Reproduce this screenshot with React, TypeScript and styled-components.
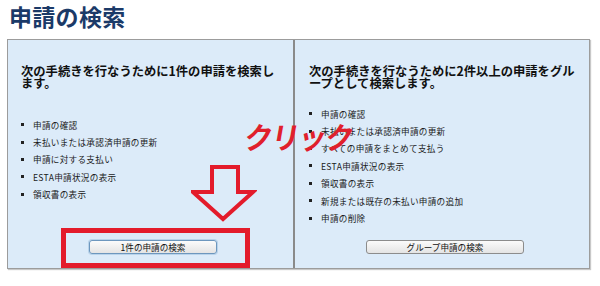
import React from "react";
import styled, { createGlobalStyle } from "styled-components";

const Global = createGlobalStyle`
  html, body { margin: 0; padding: 0; background: #ffffff; }
  body { font-family: "Noto Sans CJK JP", "Noto Sans", sans-serif; }
`;

const Page = styled.div`
  position: relative;
  width: 600px;
  height: 286px;
  overflow: hidden;
`;

const Title = styled.h1`
  margin: 0;
  padding: 3px 0 0 9px;
  height: 39px;
  box-sizing: border-box;
  font-size: 23px;
  line-height: 26px;
  font-weight: 700;
  color: #1b3a68;
  letter-spacing: 0.3px;
`;

const Box = styled.div`
  margin-left: 7px;
  width: 583px;
  height: 230px;
  box-sizing: border-box;
  display: grid;
  grid-template-columns: 285px 1fr;
  background: #dcebf9;
  border: 1px solid #9c9c9c;
  box-shadow: 1px 1px 1px #c8c8c8;
`;

const Panel = styled.div<{ $divider?: boolean; $pad: number }>`
  display: flex;
  flex-direction: column;
  padding: 25px 8px 14px ${(p) => p.$pad}px;
  border-left: ${(p) => (p.$divider ? "2px solid #8a8a8a" : "none")};
  min-width: 0;
`;

const Heading = styled.div<{ $gap: number }>`
  font-size: 12.3px;
  line-height: 12px;
  font-weight: 700;
  color: #111;
  margin-bottom: ${(p) => p.$gap}px;
`;

const List = styled.ul`
  list-style: none;
  margin: 0;
  padding: 0;
`;

const Item = styled.li`
  display: flex;
  align-items: center;
  gap: 9px;
  height: 17.4px;
  font-size: 8.6px;
  color: #1a1a1a;
  letter-spacing: 0.3px;
  &::before {
    content: "";
    width: 3px;
    height: 3px;
    background: #222;
    flex: none;
  }
`;

const ButtonRow = styled.div`
  margin-top: auto;
  display: flex;
  justify-content: center;
`;

const Button = styled.button<{ $w: number; $blue?: boolean }>`
  width: ${(p) => p.$w}px;
  height: 14px;
  padding: 0;
  border-radius: 3px;
  border: 1px solid ${(p) => (p.$blue ? "#6d97be" : "#8c8c8c")};
  background: linear-gradient(#fbfbfb, #e4e4e4);
  font-family: "Noto Sans CJK JP", sans-serif;
  font-size: 8.6px;
  line-height: 12px;
  color: #111;
  box-shadow: ${(p) => (p.$blue ? "0 0 0 1px #b9d3ea" : "none")};
`;

const RedBox = styled.div`
  position: absolute;
  left: 61px;
  top: 228px;
  width: 189px;
  height: 40px;
  box-sizing: border-box;
  border: 5px solid #e31b2b;
`;

const Arrow = styled.svg`
  position: absolute;
  left: 191px;
  top: 165px;
`;

const Click = styled.div`
  position: absolute;
  left: 245px;
  top: 117px;
  font-size: 28px;
  line-height: 38px;
  font-weight: 700;
  color: #e0202c;
  transform: skewX(-10deg) scaleY(1.08);
  transform-origin: left center;
  letter-spacing: -1px;
`;

const leftItems = [
  "申請の確認",
  "未払いまたは承認済申請の更新",
  "申請に対する支払い",
  "ESTA申請状況の表示",
  "領収書の表示",
];

const rightItems = [
  "申請の確認",
  "未払いまたは承認済申請の更新",
  "すべての申請をまとめて支払う",
  "ESTA申請状況の表示",
  "領収書の表示",
  "新規または既存の未払い申請の追加",
  "申請の削除",
];

export default function App() {
  return (
    <>
      <Global />
      <Page>
        <Title>申請の検索</Title>
        <Box>
          <Panel $pad={13}>
            <Heading $gap={27}>
              次の手続きを行なうために1件の申請を検索します。
            </Heading>
            <List>
              {leftItems.map((t) => (
                <Item key={t}>{t}</Item>
              ))}
            </List>
            <ButtonRow>
              <Button $w={128} $blue>
                1件の申請の検索
              </Button>
            </ButtonRow>
          </Panel>
          <Panel $divider $pad={14}>
            <Heading $gap={16}>
              次の手続きを行なうために2件以上の申請をグループとして検索します。
            </Heading>
            <List>
              {rightItems.map((t) => (
                <Item key={t}>{t}</Item>
              ))}
            </List>
            <ButtonRow>
              <Button $w={158}>グループ申請の検索</Button>
            </ButtonRow>
          </Panel>
        </Box>
        <Click>クリック</Click>
        <Arrow width="66" height="58" viewBox="0 0 66 58">
          <polygon
            points="21,2 47,2 47,27 62,27 32,54 2,27 21,27"
            fill="none"
            stroke="#e31b2b"
            strokeWidth="4"
            strokeLinejoin="miter"
          />
        </Arrow>
        <RedBox />
      </Page>
    </>
  );
}
